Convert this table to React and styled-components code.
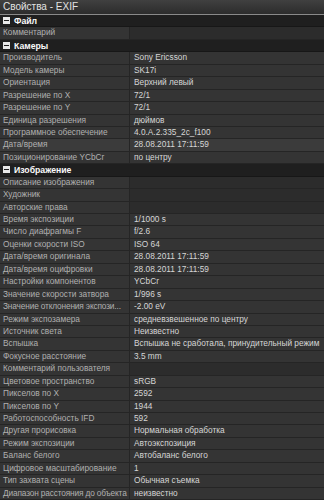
import React from "react";
import styled, { createGlobalStyle } from "styled-components";

const GlobalStyle = createGlobalStyle`
	html, body {
		margin: 0;
		padding: 0;
		background: #2e2e2e;
	}
`;

const ROW = 12.44;

const StyledWindow = styled.div`
	width: 324px;
	height: 500px;
	overflow: hidden;
	background: #2e2e2e;
	font-family: "Liberation Sans", Arial, sans-serif;
	font-size: 8.3px;
`;

const StyledTitle = styled.div`
	height: 15px;
	box-sizing: border-box;
	padding: 1px 0 0 3px;
	background: linear-gradient(#404040, #2c2c2c);
	border-bottom: 1px solid #8a8a8a;
	color: #e2e2e2;
	font-size: 10px;
	line-height: 12px;
`;

const StyledHeader = styled.div`
	height: ${ROW}px;
	box-sizing: border-box;
	display: flex;
	align-items: center;
	gap: 4px;
	padding-left: 3px;
	background: #1f1f1f;
	border-bottom: 1px solid #171717;
	color: #fafafa;
	font-size: 8.7px;
	font-weight: bold;
`;

const StyledToggle = styled.span`
	width: 7px;
	height: 7px;
	background: #e8e8e8;
	display: flex;
	align-items: center;
	justify-content: center;

	&::after {
		content: "";
		width: 5px;
		height: 1px;
		background: #1f1f1f;
	}
`;

const StyledRow = styled.div`
	height: ${ROW}px;
	box-sizing: border-box;
	display: grid;
	grid-template-columns: 130px 1fr;
	border-bottom: 1px solid #252525;
	background: ${(p) => (p.$active ? "#3b3b3b" : "#343434")};
`;

const StyledLabel = styled.div`
	padding-left: 3px;
	color: #b0b0b0;
	white-space: nowrap;
	overflow: hidden;
	line-height: 11px;
	letter-spacing: ${(p) => (p.$tight ? "-0.15px" : "0")};
	border-right: 1px solid #252525;
`;

const StyledValue = styled.div`
	padding-left: 4px;
	color: #d6d6d6;
	white-space: nowrap;
	overflow: hidden;
	line-height: 11px;
	background: ${(p) => (p.$empty ? "#2c2c2c" : "transparent")};
`;

const sections = [
	{
		title: "Файл",
		rows: [["Комментарий", ""]],
	},
	{
		title: "Камеры",
		rows: [
			["Производитель", "Sony Ericsson"],
			["Модель камеры", "SK17i"],
			["Ориентация", "Верхний левый"],
			["Разрешение по X", "72/1"],
			["Разрешение по Y", "72/1"],
			["Единица разрешения", "дюймов"],
			["Программное обеспечение", "4.0.A.2.335_2c_f100"],
			["Дата/время", "28.08.2011 17:11:59", true],
			["Позиционирование YCbCr", "по центру"],
		],
	},
	{
		title: "Изображение",
		rows: [
			["Описание изображения", ""],
			["Художник", ""],
			["Авторские права", ""],
			["Время экспозиции", "1/1000 s"],
			["Число диафрагмы F", "f/2.6"],
			["Оценки скорости ISO", "ISO 64"],
			["Дата/время оригинала", "28.08.2011 17:11:59"],
			["Дата/время оцифровки", "28.08.2011 17:11:59"],
			["Настройки компонентов", "YCbCr"],
			["Значение скорости затвора", "1/996 s"],
			["Значение отклонения экспози...", "-2.00 eV"],
			["Режим экспозамера", "средневзвешенное по центру"],
			["Источник света", "Неизвестно"],
			["Вспышка", "Вспышка не сработала, принудительный режим"],
			["Фокусное расстояние", "3.5 mm"],
			["Комментарий пользователя", ""],
			["Цветовое пространство", "sRGB"],
			["Пикселов по X", "2592"],
			["Пикселов по Y", "1944"],
			["Работоспособность IFD", "592"],
			["Другая прорисовка", "Нормальная обработка"],
			["Режим экспозиции", "Автоэкспозиция"],
			["Баланс белого", "Автобаланс белого"],
			["Цифровое масштабирование", "1"],
			["Тип захвата сцены", "Обычная съемка"],
			["Диапазон расстояния до объекта", "неизвестно"],
		],
	},
];

const App = () => (
	<StyledWindow>
		<GlobalStyle />
		<StyledTitle>Свойства - EXIF</StyledTitle>
		{sections.map((s) => (
			<React.Fragment key={s.title}>
				<StyledHeader>
					<StyledToggle />
					{s.title}
				</StyledHeader>
				{s.rows.map(([label, value, active]) => (
					<StyledRow key={label} $active={active}>
						<StyledLabel $tight={label.length > 29}>{label}</StyledLabel>
						<StyledValue $empty={!value}>{value}</StyledValue>
					</StyledRow>
				))}
			</React.Fragment>
		))}
	</StyledWindow>
);

export default App;
